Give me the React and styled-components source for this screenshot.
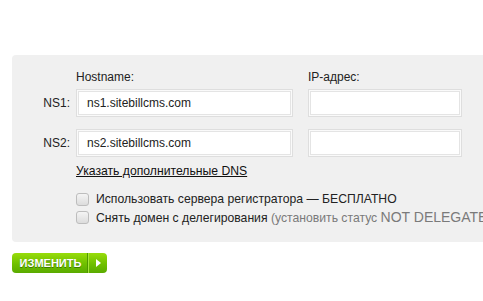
import React from "react";
import styled, { createGlobalStyle } from "styled-components";

const GlobalStyle = createGlobalStyle`
  html, body {
    margin: 0;
    padding: 0;
    background: #fff;
    overflow: hidden;
  }
  body {
    font-family: "Liberation Sans", Arial, sans-serif;
    font-size: 12px;
    color: #222;
  }
`;

const Page = styled.div`
  padding: 55px 0 0 12px;
`;

const Panel = styled.div`
  width: 500px;
  box-sizing: border-box;
  background: #f0f0f0;
  border-radius: 4px 0 0 4px;
  padding: 15px 0 16px 0;
`;

const Grid = styled.div`
  display: grid;
  grid-template-columns: 64px 232px 154px;
  align-items: center;
`;

const ColHead = styled.div`
  line-height: 14px;
  color: #222;
  padding-bottom: 5px;
`;

const NsLabel = styled.div`
  text-align: right;
  padding-right: 6px;
  line-height: 14px;
  margin-top: ${(p) => p.$mt || 0}px;
`;

const Field = styled.input`
  box-sizing: border-box;
  width: ${(p) => p.$w}px;
  height: 28px;
  margin-top: ${(p) => p.$mt || 0}px;
  border: 1px solid #dedede;
  box-shadow: inset 0 0 0 1px #fafafa, inset 0 0 0 2px #e4e4e4;
  background: #fff;
  padding: 0 10px;
  font-family: "Liberation Sans", Arial, sans-serif;
  font-size: 12px;
  color: #222;
  outline: none;
`;

const Options = styled.div`
  padding-left: 64px;
  font-size: 12.2px;
`;

const MoreLink = styled.a`
  display: inline-block;
  margin-top: 7px;
  line-height: 14px;
  color: #111;
  text-decoration: underline;
`;

const CheckList = styled.div`
  margin-top: 12px;
  display: flex;
  flex-direction: column;
`;

const CheckRow = styled.label`
  display: flex;
  align-items: center;
  gap: 7px;
  height: 18px;
  white-space: nowrap;
  line-height: 14px;
`;

const Box = styled.span`
  width: 11px;
  height: 11px;
  flex: none;
  border: 1px solid #bdbdbd;
  border-radius: 3px;
  background: linear-gradient(#f4f4f4, #dcdcdc);
`;

const Muted = styled.span`
  color: #7a7a7a;
`;

const Big = styled.span`
  font-size: 14px;
`;

const Button = styled.button`
  margin-top: 11px;
  display: flex;
  align-items: stretch;
  height: 20px;
  width: 95px;
  padding: 0;
  border: none;
  border-radius: 4px;
  background: linear-gradient(#98dc0a, #6fc000 55%, #5aaa00);
  cursor: pointer;
  overflow: hidden;
`;

const ButtonText = styled.span`
  width: 73px;
  display: flex;
  align-items: center;
  justify-content: center;
  padding-left: 2px;
  font-family: "Liberation Sans", Arial, sans-serif;
  font-weight: bold;
  font-size: 11px;
  color: #fff;
  text-shadow: 0 1px 0 #3d7a00;
  border-right: 1px solid #4f9700;
`;

const ButtonArrow = styled.span`
  flex: 1;
  display: flex;
  align-items: center;
  justify-content: center;
  border-left: 1px solid #a6e43a;
`;

export default function App() {
  return (
    <Page>
      <GlobalStyle />
      <Panel>
        <Grid>
          <div />
          <ColHead>Hostname:</ColHead>
          <ColHead>IP-адрес:</ColHead>

          <NsLabel>NS1:</NsLabel>
          <Field $w={217} defaultValue="ns1.sitebillcms.com" />
          <Field $w={154} />

          <NsLabel $mt={12}>NS2:</NsLabel>
          <Field $w={217} $mt={12} defaultValue="ns2.sitebillcms.com" />
          <Field $w={154} $mt={12} />
        </Grid>
        <Options>
          <MoreLink href="#">Указать дополнительные DNS</MoreLink>
          <CheckList>
            <CheckRow>
              <Box />
              Использовать сервера регистратора — БЕСПЛАТНО
            </CheckRow>
            <CheckRow>
              <Box />
              <span>
                Снять домен с делегирования{" "}
                <Muted>
                  (установить статус <Big>NOT DELEGATED</Big>)
                </Muted>
              </span>
            </CheckRow>
          </CheckList>
        </Options>
      </Panel>
      <Button>
        <ButtonText>ИЗМЕНИТЬ</ButtonText>
        <ButtonArrow>
          <svg width="5" height="8" viewBox="0 0 5 8">
            <path d="M0 0 L5 4 L0 8 Z" fill="#fff" />
          </svg>
        </ButtonArrow>
      </Button>
    </Page>
  );
}
